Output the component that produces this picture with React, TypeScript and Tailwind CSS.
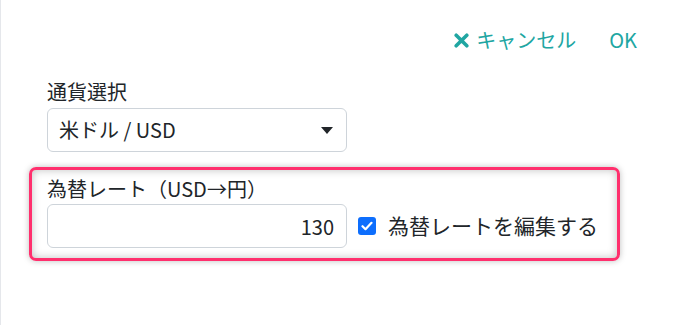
import React, { useState } from 'react';

const font = { fontFamily: '"Noto Sans CJK JP", "Noto Sans", sans-serif' };

export default function App() {
  const [currency, setCurrency] = useState('USD');
  const [rate, setRate] = useState('130');
  const [editable, setEditable] = useState(true);

  return (
    <div className="h-[325px] w-full border-l border-gray-200 bg-white text-[#212529]" style={font}>
      {/* header actions */}
      <div className="flex items-center justify-end gap-[33px] pr-[55px] pt-[26px]">
        <button className="flex items-center gap-[7px] text-[20px] leading-[28px] text-[#20a6a2]">
          <svg width="15" height="15" viewBox="0 0 15 15" className="mt-[1px]">
            <path d="M2.2 2.2 L12.8 12.8 M12.8 2.2 L2.2 12.8" stroke="currentColor" strokeWidth="3.6" strokeLinecap="round" />
          </svg>
          キャンセル
        </button>
        <button className="text-[20px] leading-[28px] text-[#20a6a2]">OK</button>
      </div>

      <div className="pl-[46px] pt-[24px]">
        <label className="block text-[20px] leading-[28px]">通貨選択</label>
        <div className="relative mt-[2px] w-[300px]">
          <select
            value={currency}
            onChange={(e) => setCurrency(e.target.value)}
            className="h-[44px] w-full appearance-none rounded-[6px] border border-[#ced4da] bg-white pl-[11px] text-[20px] outline-none"
          >
            <option value="USD">米ドル / USD</option>
            <option value="EUR">ユーロ / EUR</option>
          </select>
          <svg width="12" height="7" viewBox="0 0 12 7" className="pointer-events-none absolute right-[14px] top-[19px]">
            <path d="M0 0 H12 L6 7 Z" fill="#212529" />
          </svg>
        </div>
      </div>

      <div className="ml-[28px] mt-[15px] w-[591px] rounded-[7px] border-[3px] border-[#ff2f6d] px-[15px] pb-[10px] pt-[5px] shadow-[0_0_6px_rgba(0,0,0,0.25),inset_0_0_8px_rgba(0,0,0,0.25)]">
        <label className="block text-[20px] leading-[28px]">為替レート（USD→円）</label>
        <div className="mt-[1px] flex items-center">
          <input
            value={rate}
            onChange={(e) => setRate(e.target.value)}
            disabled={!editable}
            className="h-[44px] w-[300px] rounded-[6px] border border-[#ced4da] bg-white pr-[12px] text-right text-[20px] outline-none"
          />
          <label className="ml-[11px] flex items-center gap-[12px] text-[21px]">
            <span className="flex h-[18px] w-[18px] items-center justify-center rounded-[3px] bg-[#0d6efd]">
              <svg width="12" height="10" viewBox="0 0 12 10">
                <path d="M1.5 5.2 L4.5 8.2 L10.5 1.8" fill="none" stroke="white" strokeWidth="2.2" strokeLinecap="round" strokeLinejoin="round" />
              </svg>
            </span>
            <input type="checkbox" checked={editable} onChange={(e) => setEditable(e.target.checked)} className="hidden" />
            為替レートを編集する
          </label>
        </div>
      </div>
    </div>
  );
}
